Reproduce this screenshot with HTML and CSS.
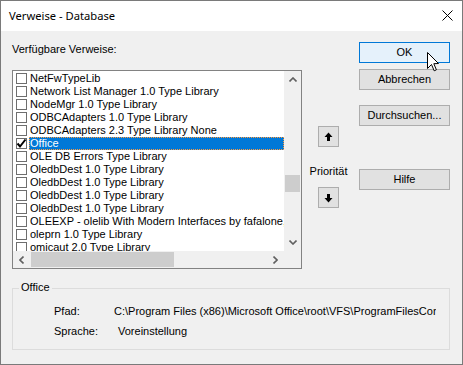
FILE: index.html
```html
<!DOCTYPE html>
<html>
<head>
<meta charset="utf-8">
<link rel="stylesheet" href="styles.css">
</head>
<body>
<div class="window">
  <div class="titlebar">
    <span class="title">Verweise - Database</span>
    <svg class="close" width="11" height="11" viewBox="0 0 11 11"><path d="M0.5 0.5 L10.5 10.5 M10.5 0.5 L0.5 10.5" stroke="#000" stroke-width="1" fill="none"/></svg>
  </div>
  <div class="content">
    <div class="top">
      <div class="left">
        <div class="label">Verfügbare Verweise:</div>
        <div class="listbox">
          <div class="viewport">
            <div class="rows">
              <div class="row"><span class="cb"></span><span class="txt">NetFwTypeLib</span></div>
              <div class="row"><span class="cb"></span><span class="txt">Network List Manager 1.0 Type Library</span></div>
              <div class="row"><span class="cb"></span><span class="txt">NodeMgr 1.0 Type Library</span></div>
              <div class="row"><span class="cb"></span><span class="txt">ODBCAdapters 1.0 Type Library</span></div>
              <div class="row"><span class="cb"></span><span class="txt">ODBCAdapters 2.3 Type Library None</span></div>
              <div class="row sel"><span class="cb checked"><svg width="11" height="11" viewBox="0 0 11 11"><path d="M1.5 5.5 L4 8.5 L9.5 1.5" stroke="#000" stroke-width="2" fill="none"/></svg></span><span class="txt">Office</span></div>
              <div class="row"><span class="cb"></span><span class="txt">OLE DB Errors Type Library</span></div>
              <div class="row"><span class="cb"></span><span class="txt">OledbDest 1.0 Type Library</span></div>
              <div class="row"><span class="cb"></span><span class="txt">OledbDest 1.0 Type Library</span></div>
              <div class="row"><span class="cb"></span><span class="txt">OledbDest 1.0 Type Library</span></div>
              <div class="row"><span class="cb"></span><span class="txt">OledbDest 1.0 Type Library</span></div>
              <div class="row"><span class="cb"></span><span class="txt">OLEEXP - olelib With Modern Interfaces by fafalone, Version 4.7</span></div>
              <div class="row"><span class="cb"></span><span class="txt">oleprn 1.0 Type Library</span></div>
              <div class="row"><span class="cb"></span><span class="txt">omicaut 2.0 Type Library</span></div>
            </div>
            <div class="vscroll">
              <div class="sbtn"><svg width="8" height="5" viewBox="0 0 8 5"><path d="M0.5 4.5 L4 1 L7.5 4.5" stroke="#606060" stroke-width="1.6" fill="none"/></svg></div>
              <div class="vtrack"><div class="vthumb"></div></div>
              <div class="sbtn"><svg width="8" height="5" viewBox="0 0 8 5"><path d="M0.5 0.5 L4 4 L7.5 0.5" stroke="#606060" stroke-width="1.6" fill="none"/></svg></div>
            </div>
          </div>
          <div class="hscroll">
            <div class="sbtn"><svg width="5" height="8" viewBox="0 0 5 8"><path d="M4.5 0.5 L1 4 L4.5 7.5" stroke="#606060" stroke-width="1.6" fill="none"/></svg></div>
            <div class="htrack"><div class="hthumb"></div></div>
            <div class="sbtn"><svg width="5" height="8" viewBox="0 0 5 8"><path d="M0.5 0.5 L4 4 L0.5 7.5" stroke="#606060" stroke-width="1.6" fill="none"/></svg></div>
            <div class="corner"></div>
          </div>
        </div>
      </div>
      <div class="mid">
        <div class="abtn up"><svg width="9" height="10" viewBox="0 0 9 10"><path d="M4.5 0.5 L8.5 5 L6 5 L6 9 L3 9 L3 5 L0.5 5 Z" fill="#000"/></svg></div>
        <div class="prio">Priorität</div>
        <div class="abtn down"><svg width="9" height="10" viewBox="0 0 9 10"><path d="M4.5 9.5 L8.5 5 L6 5 L6 1 L3 1 L3 5 L0.5 5 Z" fill="#000"/></svg></div>
      </div>
      <div class="right">
        <div class="btn default b-ok">OK</div>
        <div class="btn b-cancel">Abbrechen</div>
        <div class="btn b-browse">Durchsuchen...</div>
        <div class="btn b-help">Hilfe</div>
      </div>
    </div>
    <div class="group">
      <span class="legend">Office</span>
      <div class="info">
        <span class="k">Pfad:</span><span class="v path">C:\Program Files (x86)\Microsoft Office\root\VFS\ProgramFilesCommonX86\Microsoft Shared\OFFICE16\MSO.DLL</span>
        <span class="k">Sprache:</span><span class="v lang">Voreinstellung</span>
      </div>
    </div>
  </div>
  <svg class="cursor" width="13" height="20" viewBox="0 0 13 20"><path d="M0.5 0.5 L0.5 16.5 L4.5 12.5 L7.2 18.8 L9.4 17.8 L6.8 11.7 L11.5 11.5 Z" fill="#fff" stroke="#000" stroke-width="1" stroke-linejoin="miter"/></svg>
</div>
</body>
</html>
```
FILE: styles.css
```css
* { box-sizing: border-box; }
html, body { margin: 0; padding: 0; }
body { background: #f0f0f0; }

.window {
  position: relative;
  width: 463px;
  height: 365px;
  border: 1px solid #7a7a7a;
  background: #f0f0f0;
  font-family: "Liberation Sans", Arial, sans-serif;
  font-size: 11px;
  color: #000;
  overflow: hidden;
}

.titlebar {
  height: 30px;
  background: #fff;
  display: flex;
  align-items: center;
  justify-content: space-between;
  padding: 0 9px 0 8px;
}
.title {
  font-family: "Noto Sans", "Open Sans", sans-serif;
  font-size: 11.2px;
  line-height: 14px;
  margin-top: -1px;
}
.close { display: block; margin-top: -1px; }

.content { padding: 0 0 0 11px; }

.top { display: flex; height: 239px; }

.left { width: 290px; padding-top: 12px; }
.label { line-height: 13px; height: 13px; }

.listbox {
  margin-top: 14px;
  width: 290px;
  height: 199px;
  border: 1px solid #828282;
  background: #fff;
  display: flex;
  flex-direction: column;
}
.viewport { display: flex; height: 180px; }
.rows {
  width: 271px;
  height: 180px;
  padding-top: 1px;
  overflow: hidden;
}
.row {
  height: 13px;
  display: flex;
  align-items: flex-start;
  white-space: nowrap;
  overflow: hidden;
}
.cb {
  flex: none;
  width: 11px;
  height: 11px;
  margin: 1px 0 0 3px;
  border: 1px solid #6e6e6e;
  background: #fff;
  position: relative;
}
.cb svg { position: absolute; left: -1px; top: -1px; }
.txt {
  margin-left: 2px;
  padding-left: 1px;
  line-height: 13px;
  height: 13px;
  flex: 1;
  overflow: hidden;
}
.row.sel .txt {
  background: #0078d7;
  color: #fff;
  outline: 1px dotted #ff9a3c;
  outline-offset: -1px;
}

.vscroll {
  width: 17px;
  height: 180px;
  background: #f0f0f0;
  display: flex;
  flex-direction: column;
}
.sbtn {
  flex: none;
  width: 17px;
  height: 17px;
  display: flex;
  align-items: center;
  justify-content: center;
}
.sbtn svg { display: block; }
.vtrack { flex: 1; }
.vthumb {
  margin: 87px 1px 0 1px;
  height: 17px;
  background: #cdcdcd;
}

.hscroll {
  display: flex;
  height: 17px;
  background: #f0f0f0;
}
.htrack { width: 237px; }
.hthumb {
  margin: 1px 0 0 1px;
  width: 143px;
  height: 15px;
  background: #cdcdcd;
}
.corner { width: 17px; height: 17px; background: #f0f0f0; }

.mid {
  width: 53px;
  padding-top: 95px;
  display: flex;
  flex-direction: column;
  align-items: center;
}
.abtn {
  width: 21px;
  height: 21px;
  border: 1px solid #adadad;
  background: #e1e1e1;
  display: flex;
  align-items: center;
  justify-content: center;
}
.abtn svg { display: block; }
.prio {
  margin-top: 18px;
  line-height: 13px;
  height: 13px;
}
.abtn.down { margin-top: 9px; }

.right {
  margin-left: 4px;
  width: 91px;
  padding-top: 11px;
  display: flex;
  flex-direction: column;
}
.btn {
  height: 21px;
  border: 1px solid #adadad;
  background: #e1e1e1;
  display: flex;
  align-items: center;
  justify-content: center;
  line-height: 13px;
}
.btn.default { border-color: #0078d7; background: #e5f1fb; }
.b-cancel { margin-top: 6px; }
.b-browse { margin-top: 15px; }
.b-help { margin-top: 43px; }

.group {
  position: relative;
  margin-top: 18px;
  width: 438px;
  height: 62px;
  border: 1px solid #dcdcdc;
  padding: 16px 0 0 41px;
}
.legend {
  position: absolute;
  left: 6px;
  top: -8px;
  padding: 0 2px;
  background: #f0f0f0;
  line-height: 13px;
}
.info {
  display: grid;
  grid-template-columns: 60px 322px;
  row-gap: 7px;
  line-height: 13px;
}
.v { white-space: nowrap; overflow: hidden; height: 13px; }
.lang { padding-left: 4px; }

.cursor {
  position: absolute;
  left: 426px;
  top: 51px;
}
```
